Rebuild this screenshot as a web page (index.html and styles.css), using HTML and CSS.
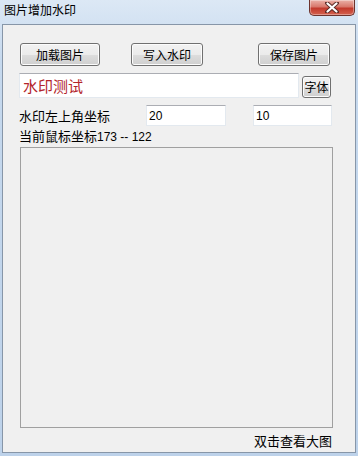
FILE: index.html
```html
<!DOCTYPE html>
<html lang="zh-CN">
<head>
  <meta charset="UTF-8">
  <title>图片增加水印</title>
  <link rel="stylesheet" href="styles.css">
</head>
<body>
  <div id="window">
    <div class="titlebar">
      <span class="title">图片增加水印</span>
      <div class="close">
        <svg width="14" height="11" viewBox="0 0 14 11">
          <path d="M2 1 L12 10 M12 1 L2 10" stroke="#5a2a26" stroke-width="4" stroke-linecap="round"/>
          <path d="M2.5 1.5 L11.5 9.5 M11.5 1.5 L2.5 9.5" stroke="#fff" stroke-width="2.2" stroke-linecap="round"/>
        </svg>
      </div>
    </div>
    <div class="client">
      <div class="row row--buttons">
        <button class="btn btn--load">加载图片</button>
        <button class="btn btn--write">写入水印</button>
        <button class="btn btn--save">保存图片</button>
      </div>
      <div class="row row--text">
        <div class="field field--text">水印测试</div>
        <button class="btn btn--font">字体</button>
      </div>
      <div class="row row--pos">
        <span class="label">水印左上角坐标</span>
        <div class="field field--x">20</div>
        <div class="field field--y">10</div>
      </div>
      <div class="mouse">当前鼠标坐标<span class="num">173 -- 122</span></div>
      <div class="picture"></div>
      <div class="hint">双击查看大图</div>
    </div>
  </div>
</body>
</html>
```

FILE: styles.css
```css
* {
  padding: 0;
  margin: 0;
  box-sizing: border-box;
}
body {
  width: 358px;
  height: 456px;
  overflow: hidden;
  font-family: "Noto Sans CJK SC", "Liberation Sans", sans-serif;
  font-size: 12px;
  color: #000;
}
#window {
  width: 358px;
  height: 456px;
  background: linear-gradient(#dce8f5, #c6d9ee 60px, #bdd2ea);
  display: flex;
  flex-direction: column;
}
.titlebar {
  height: 24px;
  display: flex;
  justify-content: space-between;
  align-items: flex-start;
}
.title {
  margin: 2px 0 0 4px;
  line-height: 16px;
  font-size: 12px;
}
.close {
  width: 46px;
  height: 16px;
  margin-right: 3px;
  border: 1px solid #6d332d;
  border-top: none;
  border-radius: 0 0 5px 5px;
  background: linear-gradient(#eab1a8, #d8776b 45%, #c2392c 55%, #d4624f);
  box-shadow: inset 0 0 0 1px rgba(255, 255, 255, 0.35);
  display: flex;
  align-items: center;
  justify-content: center;
}
.client {
  margin: 0 2px 3px;
  flex: 1;
  background: #f0f0f0;
  border: 1px solid #8796a8;
  display: flex;
  flex-direction: column;
}
.row {
  display: flex;
  align-items: center;
}
.row--buttons {
  margin-top: 18px;
  height: 23px;
}
.btn {
  height: 23px;
  font-family: inherit;
  font-size: 12px;
  color: #000;
  border: 1px solid #707070;
  border-radius: 3px;
  background: linear-gradient(#f2f2f2, #ebebeb 50%, #dddddd 51%, #cfcfcf);
  box-shadow: inset 0 0 0 1px #fcfcfc;
}
.btn--load {
  width: 80px;
  margin-left: 17px;
}
.btn--write {
  width: 72px;
  margin-left: 31px;
}
.btn--save {
  width: 72px;
  margin-left: 55px;
}
.row--text {
  margin-top: 7px;
  height: 25px;
}
.field {
  background: #fff;
  border: 1px solid #e3e9ef;
  border-top-color: #abadb3;
  display: flex;
  align-items: center;
}
.field--text {
  width: 280px;
  height: 25px;
  margin-left: 16px;
  padding-left: 3px;
  font-size: 15px;
  color: #b3242a;
}
.btn--font {
  width: 29px;
  height: 22px;
  margin-left: 3px;
  margin-top: 2px;
}
.row--pos {
  margin-top: 7px;
  height: 21px;
}
.label {
  width: 127px;
  margin-left: 16px;
  font-size: 13px;
}
.field--x,
.field--y {
  height: 21px;
  width: 80px;
  padding-left: 2px;
  font-family: "Liberation Sans", sans-serif;
  font-size: 12px;
}
.field--y {
  width: 79px;
  margin-left: 27px;
}
.mouse {
  margin: 2px 0 0 16px;
  line-height: 16px;
  font-size: 13px;
}
.num {
  font-family: "Liberation Sans", sans-serif;
  font-size: 12px;
}
.picture {
  margin: 2px 0 0 17px;
  width: 313px;
  height: 281px;
  border: 1px solid #a0a0a0;
}
.hint {
  margin: 5px 0 0 0;
  width: 329px;
  text-align: right;
  line-height: 16px;
  font-size: 13px;
}
```
